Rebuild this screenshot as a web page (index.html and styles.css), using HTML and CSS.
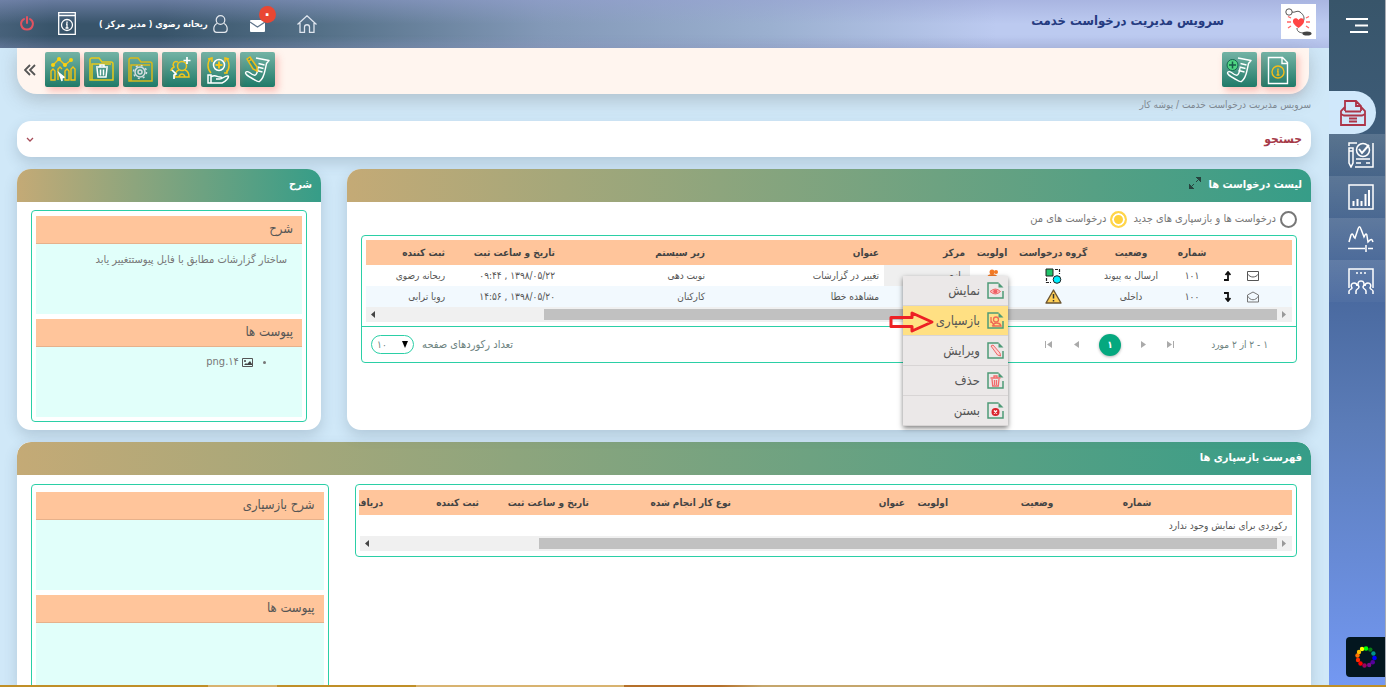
FILE: index.html
```html
<!DOCTYPE html>
<html lang="fa" dir="rtl">
<head>
<meta charset="utf-8">
<title>سرویس مدیریت درخواست خدمت</title>
<link rel="stylesheet" href="styles.css">
</head>
<body>
<svg class="defs" aria-hidden="true">
  <symbol id="i-page" viewBox="0 0 17 17"><path d="M11.500 1H1v15h15V9" fill="none" stroke="#4f9a77" stroke-width="1.500"/><path d="M11.500 0.500V5.500H16.500z" fill="#4f9a77"/></symbol>
  <symbol id="i-note" viewBox="0 0 35 35"><path d="M16 6l13 2.500-2.500 3-1.500 7c-1 5-3 9-5.500 11-2 1-5-2-8-3.500-3-1.500-5.500-3-6-5 0-1.500 2-2 4-.5 2.500 2 4.500 3.500 6 2.500 2-1.500 2-4 2.500-7" fill="none" stroke="#fff" stroke-width="1.400" stroke-linejoin="round"/><path d="M18.500 11.500l6 1.500M17.500 15l6 1.500M16.500 18.500l6 1.500" stroke="#fff" stroke-width="1.400"/></symbol>
</svg>
<div class="app">
  <nav class="sidebar" aria-label="منوی اصلی">
    <button class="menu-toggle" aria-label="منو"><svg width="22" height="17" viewBox="0 0 22 17"><path d="M0 2h22M9 8.500h13M4 15h18" stroke="#fff" stroke-width="2"/></svg></button>
    <a class="nav-item active" href="#" aria-label="پوشه کار"><svg width="26" height="26" viewBox="0 0 26 26" fill="none" stroke="#ad3447" stroke-width="1.800"><path d="M5 11V1h11l5 5v5M16 1v5h5"/><path d="M5 7L1 11v3l3 1.500h18l3-1.500v-3l-4-4M5 11.500h16M1 13v12h24V13M9 18.500h8M9 21.500h8"/></svg></a>
    <a class="nav-item" href="#" aria-label="ارزیابی"><svg width="26" height="26" viewBox="0 0 26 26" fill="none" stroke="#fff" stroke-width="1.500"><path d="M1 4V1h8M25 1v24H7M1 6h4v15l-2 4-2-4zM1 9h4M8 17h14M8 21h5M18 21h4"/><circle cx="15" cy="8" r="6.500"/><path d="M11 7l3 4 7-8" stroke-width="2"/></svg></a>
    <a class="nav-item" href="#" aria-label="گزارش"><svg width="26" height="26" viewBox="0 0 26 26" fill="none" stroke="#fff" stroke-width="1.500"><path d="M1 1h24v24H1z"/><path d="M5.500 22v-5M9.500 22v-7M13.500 22v-5M17.500 22V10M21 22V6" stroke-width="2"/></svg></a>
    <a class="nav-item" href="#" aria-label="نمودار"><svg width="26" height="26" viewBox="0 0 26 26" fill="none" stroke="#fff" stroke-width="1.500"><path d="M1 16l2-7c1-2 2-1 3 2l1 1 3-9c1-3 2-3 3 0l3 8 1-2c1-2 2-1 2 1l1 6 2-2c2-1 2 0 3 2M0 22.500h17M20 22.500h5M18 19v7"/></svg></a>
    <a class="nav-item" href="#" aria-label="کاربران"><svg width="26" height="26" viewBox="0 0 26 26" fill="none" stroke="#fff" stroke-width="1.500"><path d="M1 20V1h24v19M8 5h2M12 5h2M16 5h2"/><path d="M8 26v-3c0-2 3-2 3-4-2-3-1-6 2-6s4 3 2 6c0 2 3 2 3 4v3M1 26v-3c0-1 3-2 3-3-2-3 0-5 2-5s3 1 3 3M25 26v-3c0-1-3-2-3-3 2-3 0-5-2-5s-3 1-3 3"/></svg></a>
    <button class="theme" aria-label="انتخاب رنگ"><svg width="22" height="22" viewBox="-11 -11 22 22"><g><circle cy="-8.500" r="2.300" fill="#0f0"/><circle cx="4.300" cy="-7.400" r="2.200" fill="#087b16"/><circle cx="7.400" cy="-3.500" r="2.200" fill="#00918c"/><circle cx="8.500" cy="1" r="2.300" fill="#00f"/><circle cx="6.700" cy="5.200" r="2.300" fill="#55009b"/><circle cx="3.200" cy="8" r="2.200" fill="#7c0b8b"/><circle cx="-1.500" cy="8.500" r="2.200" fill="#a3005e"/><circle cx="-5.500" cy="6.500" r="2.200" fill="#f00"/><circle cx="-8" cy="3" r="2.200" fill="#ff2900"/><circle cx="-8.500" cy="-1.500" r="2.200" fill="#ff6f00"/><circle cx="-7" cy="-5" r="2.200" fill="#fb0"/><circle cx="-4" cy="-8" r="2.200" fill="#ff0"/></g></svg></button>
  </nav>
  <div class="main">
    <header class="topbar">
      <svg class="logo" width="35" height="35" viewBox="0 0 35 35"><path fill="#fff" d="M0 0h35v35H0z"/><circle cx="8" cy="8" r="3.200" fill="none" stroke="#555"/><path d="M11 8c3 1 5-2 8 0 4 3 5 6 3 10M16 24c0 4 3 5 8 5" fill="none" stroke="#555"/><ellipse cx="26" cy="29.500" rx="4.500" ry="2" fill="#444"/><path d="M17.500 24c-4-3-6-5-5.500-7.500.8-3 4-3 5.500-.5 1.500-2.500 5-2.500 5.500.5.500 2.500-1.500 4.500-5.500 7.500z" fill="#ff4545"/><path d="M10 18H6M10 14l-3-1.500M10 22l-3 2M25 18h4M25 14l3-1.500M25 22l3 2" stroke="#ff6565" stroke-width="1.300"/></svg>
      <h1>سرویس مدیریت درخواست خدمت</h1>
      <div class="tools">
        <a class="home" href="#" aria-label="خانه"><svg width="20" height="18" viewBox="0 0 20 18" fill="none" stroke="#dfe5ee" stroke-width="1.300"><path d="M.5 9.500L10 .8l9.500 8.700M3 8v9.300h4.500V12c0-3 5-3 5 0v5.300H17V8"/></svg></a>
        <a class="mail" href="#" aria-label="پیام ها"><svg width="15" height="12" viewBox="0 0 15 12"><rect width="15" height="12" rx="1" fill="#fff"/><path d="M0 2l7.500 5L15 2" fill="none" stroke="#61758b" stroke-width="1.200"/></svg><span class="badge">۰</span></a>
        <a class="user" href="#"><svg width="15" height="18" viewBox="0 0 15 18" fill="none" stroke="#e4e8ee" stroke-width="1.200"><circle cx="7.500" cy="5" r="4.300"/><path d="M4 8.500C2 9.500.8 11 .8 14c0 3 1.200 3.300 2.700 3.300h8c1.500 0 2.700-.3 2.700-3.300 0-3-1.200-4.500-3.200-5.500"/></svg><span>ریحانه رضوی ( مدیر مرکز )</span></a>
        <a class="info" href="#" aria-label="راهنما"><svg width="18" height="23" viewBox="0 0 18 23" fill="none" stroke="#fff" stroke-width="1.300"><path d="M.7.700h16.600v21.600H.7zM.7 3.500h16.600"/><circle cx="9" cy="13" r="5.500"/><path d="M9 9.500V11M8 12h1v4M7.500 16h3"/></svg></a>
        <button class="power" aria-label="خروج"><svg width="14" height="15" viewBox="0 0 14 15" fill="none" stroke="#e25360" stroke-width="2" stroke-linecap="round"><path d="M4 3C-1 6 1 13.500 7 13.500S15 6 10 3M7 1v6"/></svg></button>
      </div>
    </header>
    <div class="content">
      <div class="ribbon">
        <button class="tool" aria-label="اطلاعات"><svg width="35" height="35" viewBox="0 0 35 35" fill="none" stroke="#fff" stroke-width="1.400"><path d="M7.500 5.500h14l5 5v21h-19zM21 5.500v6h5.500"/><g stroke="#f4bd19"><circle cx="17" cy="20" r="6"/><path d="M17 16.500V18M16 19h1v4M15.500 23h3"/></g></svg></button>
        <button class="tool" aria-label="درخواست جدید"><svg width="35" height="35"><use href="#i-note"/><circle cx="10.500" cy="13" r="5.500" fill="#4fd582" stroke="#176850"/><path d="M10.500 9.500v7M7 13h7" stroke="#175b48" stroke-width="1.500"/></svg></button>
        <span class="spacer"></span>
        <button class="tool" aria-label="ویرایش"><svg width="35" height="35"><use href="#i-note"/><path d="M7 7l3-2 7 10v4l-4-2zM9 9l3-2" fill="#3f9280" stroke="#f0bd17" stroke-width="1.500"/></svg></button>
        <button class="tool" aria-label="خدمت"><svg width="35" height="35" viewBox="0 0 35 35" fill="none" stroke="#f2c51b" stroke-width="1.500"><path d="M10 6c-4 4-4 11 0 15M25 6c4 4 4 11 0 15M7 7l4-1v4M28 7l-4-1v4M23 21h3v-3"/><circle cx="18" cy="13" r="5.500" stroke="#fff"/><path d="M18 9.500v7M14.500 13h7" stroke-width="2"/><path d="M7 23h3v8H7zM10 25c4-3 6 0 9 0 3 0 2 2-1 2h-3m3 0c3 1 6-4 9-3 2 1-3 6-6 7H10" stroke="#fff"/></svg></button>
        <button class="tool" aria-label="افزودن کاربر"><svg width="35" height="35" viewBox="0 0 35 35" fill="none" stroke="#f2c51b" stroke-width="1.500"><circle cx="20" cy="14" r="4.500"/><path d="M17 18c-3 1-4 3-4 7h14c0-4-1-6-4-7M16 10c-4-2-6 2-4 5-2 1-3 2-3 4M17 25c1-4 5-4 6 0"/><path d="M25 5v7M21.500 8.500h7M10 18l4 4-2 1v4" stroke="#fff" stroke-width="1.700"/></svg></button>
        <button class="tool" aria-label="تنظیمات پوشه"><svg width="35" height="35" viewBox="0 0 35 35" fill="none" stroke="#d8b91d" stroke-width="1.500"><path d="M6 29V8c0-1 1-2 2-2h7l3 4h9c1 0 2 1 2 2v17zM8 29V13h19"/><g stroke="#d4dde0"><circle cx="17" cy="20" r="5"/><circle cx="17" cy="20" r="2"/><circle cx="17" cy="20" r="6.500" stroke-dasharray="2 3.100"/></g></svg></button>
        <button class="tool" aria-label="حذف پوشه"><svg width="35" height="35" viewBox="0 0 35 35" fill="none" stroke="#e6c91c" stroke-width="1.500"><path d="M6 28V8c0-1 1-2 2-2h7l3 4h9c1 0 2 1 2 2v16zM8 28V12h19"/><path d="M12 15h12M16 15v-2h4v2M13 16l1 9h8l1-9M16.500 17.500v6M19.500 17.500v6" stroke="#fff"/></svg></button>
        <button class="tool" aria-label="نمودار عملکرد"><svg width="35" height="35" viewBox="0 0 35 35" fill="none" stroke="#f4c414" stroke-width="1.400"><path d="M8 13l6-6 6 6 6-5"/><g fill="#f9d310" stroke="none"><circle cx="8" cy="13" r="2"/><circle cx="14" cy="7" r="2"/><circle cx="20" cy="13" r="2"/><circle cx="26" cy="8" r="2"/></g><path d="M6 28V19l2-2 2 2v9zM13 28V17l2-2 2 2M20 28V19l2-2 2 2v9zM26 28V17l2-2 2 2v11z"/><path d="M14 21l5 4-2 1v3z" fill="#fff" stroke="#fff"/></svg></button>
        <button class="collapse" aria-label="بستن نوار"><svg width="12" height="12" viewBox="0 0 12 12"><path d="M6 1L1 6l5 5M11 1L6 6l5 5" fill="none" stroke="#555" stroke-width="1.800"/></svg></button>
      </div>
      <nav class="crumbs" aria-label="مسیر">سرویس مدیریت درخواست خدمت / پوشه کار</nav>
      <button class="search card"><span>جستجو</span><svg width="8" height="5" viewBox="0 0 8 5"><path d="M1 1l3 3 3-3" fill="none" stroke="#a64b58" stroke-width="1.300"/></svg></button>
      <div class="row">
        <section class="card requests">
          <h2>لیست درخواست ها <svg width="12" height="12" viewBox="0 0 12 12"><path d="M7 0h5v5zM0 7v5h5zM7 5l3-3M2 10l3-3" stroke="#27443f" fill="#27443f"/></svg></h2>
          <div class="list-body">
            <div class="filters">
              <label><input type="radio" name="scope">درخواست ها و بازسپاری های جدید</label>
              <label><input type="radio" name="scope" checked>درخواست های من</label>
            </div>
            <div class="frame">
              <div class="grid-wrap">
                <table class="grid">
                  <colgroup><col style="width:26px"><col style="width:26px"><col style="width:26px"><col style="width:44px"><col style="width:78px"><col style="width:78px"><col style="width:44px"><col style="width:86px"><col style="width:174px"><col style="width:150px"><col style="width:110px"><col style="width:84px"></colgroup>
                  <thead><tr><th></th><th></th><th></th><th class="mid">شماره</th><th class="mid">وضعیت</th><th class="mid">گروه درخواست</th><th class="mid">اولویت</th><th>مرکز</th><th>عنوان</th><th>زیر سیستم</th><th>تاریخ و ساعت ثبت</th><th>ثبت کننده</th></tr></thead>
                  <tbody>
                    <tr><td></td><td class="mid"><svg width="12" height="10" viewBox="0 0 12 10"><path d="M.5.500h11v9H.5zM.5 3c3 4 8 4 11 0" fill="none" stroke="#555"/></svg></td><td class="mid"><svg width="7" height="10" viewBox="0 0 7 10"><path d="M0 9h4V2M1.500 4L4 1l2.500 3" fill="none" stroke="#111" stroke-width="1.800"/></svg></td><td class="mid">۱۰۱</td><td class="mid">ارسال به پیوند</td><td class="mid"><svg width="17" height="16" viewBox="0 0 17 16"><path d="M1 1h7v7H1z" fill="#22c36a" stroke="#222"/><circle cx="12" cy="11.500" r="3.800" fill="#00efff" stroke="#222"/><path d="M10 1.500h4.500V6M1.500 10v4.500H6" fill="none" stroke="#222" stroke-width="1.200" stroke-dasharray="3 1"/></svg></td><td class="mid"><svg width="13" height="14" viewBox="0 0 13 14" fill="#f47b26"><circle cx="6" cy="3" r="2.500"/><circle cx="10" cy="3" r="2"/><path d="M1 8c1-4 9-4 11 0v4H1z"/></svg></td><td class="picked">رازی</td><td>تغییر در گزارشات</td><td>نوبت دهی</td><td>۱۳۹۸/۰۵/۲۲ , ۰۹:۴۴</td><td>ریحانه رضوی</td></tr>
                    <tr><td></td><td class="mid"><svg width="12" height="12" viewBox="0 0 12 12"><path d="M.5 4L6 1l5.500 3v7H.5zM.5 5c3 5 8 5 11 0" fill="none" stroke="#777"/></svg></td><td class="mid"><svg width="7" height="10" viewBox="0 0 7 10"><path d="M0 1h4v7M1.500 6L4 9l2.500-3" fill="none" stroke="#111" stroke-width="1.800"/></svg></td><td class="mid">۱۰۰</td><td class="mid">داخلی</td><td class="mid"><svg width="17" height="15" viewBox="0 0 17 15"><path d="M8.500 1L16 14H1z" fill="#ffcf55" stroke="#6b5533" stroke-width="1.400" stroke-linejoin="round"/><path d="M8.500 5v4.500M8.500 11v1.500" stroke="#333" stroke-width="1.500"/></svg></td><td></td><td></td><td>مشاهده خطا</td><td>کارکنان</td><td>۱۳۹۸/۰۵/۲۰ , ۱۴:۵۶</td><td>رویا ترابی</td></tr>
                  </tbody>
                </table>
                <div class="scroll"><svg width="5" height="7" viewBox="0 0 5 7"><path d="M0 0l4 3.500L0 7z" fill="#999"/></svg><span class="thumb"></span><svg width="5" height="7" viewBox="0 0 5 7"><path d="M4 0L0 3.500 4 7z" fill="#444"/></svg></div>
              </div>
              <div class="pager">
                <span class="count">۱ - ۲ از ۲ مورد</span>
                <div class="pages">
                  <button aria-label="اولین"><svg width="8" height="7" viewBox="0 0 8 7"><path d="M0 0l5 3.500L0 7zM6 0h1v7H6z"/></svg></button>
                  <button aria-label="قبلی"><svg width="8" height="7" viewBox="0 0 8 7"><path d="M1 0l5 3.500L1 7z"/></svg></button>
                  <button class="current">۱</button>
                  <button aria-label="بعدی"><svg width="8" height="7" viewBox="0 0 8 7"><path d="M7 0L2 3.500 7 7z"/></svg></button>
                  <button aria-label="آخرین"><svg width="8" height="7" viewBox="0 0 8 7"><path d="M7 0L2 3.500 7 7zM0 0h1v7H0z"/></svg></button>
                </div>
                <label class="size" for="size">تعداد رکوردهای صفحه</label>
                <span class="select"><select id="size" dir="ltr"><option>۱۰</option></select><svg width="6" height="7" viewBox="0 0 6 7"><path d="M0 0h6L3 7z"/></svg></span>
              </div>
            </div>
          </div>
          <div class="menu" role="menu">
            <button role="menuitem"><svg width="17" height="17"><use href="#i-page"/><path d="M3 9.500q5.500-5 10.500 0-5 5-10.500 0z" fill="#ffb3b3" stroke="#ee6f70"/><circle cx="8.300" cy="9.500" r="2" fill="#ee5f65"/></svg>نمایش</button>
            <button role="menuitem" class="hot"><svg width="17" height="17"><use href="#i-page"/><g fill="none" stroke="#ef6b55" stroke-width="1.300"><circle cx="9" cy="7.500" r="2.500"/><path d="M4 5v6M6 14c0-4 7-4 8 0zM4 9l3 4-2 1"/></g></svg>بازسپاری</button>
            <button role="menuitem"><svg width="17" height="17"><use href="#i-page"/><path d="M4 4l2-1 7 8 .5 3-3-1z" fill="#ffd2d2" stroke="#ed6666"/></svg>ویرایش</button>
            <button role="menuitem"><svg width="17" height="17"><use href="#i-page"/><path d="M3.500 6h10M7 6V4h3v2M5 7l.7 7h5.600l.7-7M7.500 8v5M9.500 8v5" fill="none" stroke="#f16b6b" stroke-width="1.300"/></svg>حذف</button>
            <button role="menuitem"><svg width="17" height="17"><use href="#i-page"/><circle cx="8.500" cy="10" r="4" fill="#d9242d"/><path d="M7 8.500l3 3M10 8.500l-3 3" stroke="#fff" stroke-width="1.400"/></svg>بستن</button>
            <svg class="pointer" width="46" height="22" viewBox="0 0 46 22"><path d="M2 6.500h21V2l20 9-20 9v-4.500H2z" fill="none" stroke="#ed2024" stroke-width="3" stroke-linejoin="round"/></svg>
          </div>
        </section>
        <section class="card side">
          <h2>شرح</h2>
          <div class="side-body">
            <div class="frame notes">
              <h3>شرح</h3>
              <div class="note"><p>ساختار گزارشات مطابق با فایل پیوستتغییر یابد</p></div>
              <h3>پیوست ها</h3>
              <div class="note"><ul><li><a href="#"><svg width="11" height="9" viewBox="0 0 11 9"><path d="M.5.500h10v8H.5z" fill="none" stroke="#555"/><path d="M2 7l2-2 1 1 3-3 2 3v1z" fill="#444"/><circle cx="3" cy="3" r="1" fill="#444"/></svg> ۱۴.png</a></li></ul></div>
            </div>
          </div>
        </section>
      </div>
      <section class="card assignments">
        <h2>فهرست بازسپاری ها</h2>
        <div class="assign-body">
          <div class="frame">
            <div class="grid-wrap">
              <table class="grid">
                <colgroup><col style="width:139px"><col style="width:32px"><col style="width:168px"><col style="width:43px"><col style="width:174px"><col style="width:142px"><col style="width:110px"><col style="width:96px"><col style="width:29px"></colgroup>
                <thead><tr><th></th><th class="mid">شماره</th><th class="mid">وضعیت</th><th>اولویت</th><th>عنوان</th><th>نوع کار انجام شده</th><th>تاریخ و ساعت ثبت</th><th>ثبت کننده</th><th class="cut">دریافت</th></tr></thead>
                <tbody><tr><td colspan="9">رکوردی برای نمایش وجود ندارد</td></tr></tbody>
              </table>
              <div class="scroll"><svg width="5" height="7" viewBox="0 0 5 7"><path d="M0 0l4 3.500L0 7z" fill="#999"/></svg><span class="thumb"></span><svg width="5" height="7" viewBox="0 0 5 7"><path d="M4 0L0 3.500 4 7z" fill="#444"/></svg></div>
            </div>
          </div>
          <div class="frame notes">
            <h3>شرح بازسپاری</h3>
            <div class="note"></div>
            <h3>پیوست ها</h3>
            <div class="note"></div>
          </div>
        </div>
      </section>
    </div>
  </div>
</div>
<footer class="edge"></footer>
</body>
</html>
```
FILE: styles.css
```css
* { box-sizing: border-box; }
body {
  margin: 0;
  height: 100vh;
  display: flex;
  flex-direction: column;
  overflow: hidden;
  background: #d0e8f8;
  color: #555;
  font: 10px/16px "DejaVu Sans Condensed", "DejaVu Sans", sans-serif;
}
h1, h2, h3, p, ul { margin: 0; }
button, select, input { font: inherit; color: inherit; }
button { border: 0; padding: 0; background: none; }
a { color: inherit; text-decoration: none; }
svg { display: block; flex: none; }
.defs { position: absolute; width: 0; height: 0; }
.app { display: flex; flex: 1; min-height: 0; }
.edge { height: 2px; flex: none; background: linear-gradient(90deg, #c08f28 0 15%, #d8b370 15% 20%, #c08f28 20% 30%, #d8b370 30% 45%, #b5702a 45% 52%, #c5a66c 55% 70%, #c08f28 80%); }

.sidebar {
  position: relative;
  width: 57px;
  flex: none;
  border-right: 1px solid #a9adb5;
  background: linear-gradient(#38556a, #3c5a74 14%, #4a6aa0 44%, #5b7cb8 62%, #7398f2);
}
.menu-toggle { display: flex; width: 100%; height: 91px; padding: 17px 17px 0; justify-content: center; }
.nav-item {
  display: flex;
  align-items: center;
  justify-content: center;
  height: 42px;
  padding-left: 8px;
  background: linear-gradient(rgba(255, 255, 255, .14), rgba(255, 255, 255, .03));
}
.nav-item.active { height: 43px; margin-right: 9px; padding: 0; background: #d0e8fb; border-radius: 0 22px 22px 0; }
.theme { position: absolute; right: 0; bottom: 8px; width: 39px; height: 40px; display: flex; align-items: center; justify-content: center; background: #03161f; border-radius: 4px 0 0 4px; }

.main { flex: 1; min-width: 0; display: flex; flex-direction: column; }
.topbar {
  display: flex;
  align-items: center;
  height: 48px;
  flex: none;
  padding: 0 13px 7px 20px;
  background: linear-gradient(rgba(150, 160, 210, .5), rgba(150, 160, 210, 0) 50%, rgba(150, 160, 210, 0) 75%, rgba(150, 160, 210, .3)), linear-gradient(90deg, #47617a, #38546a 4%, #38546a 12%, #547087 24%, #8399b8 41%, #9bb0d0 58%, #bccaf0 75%);
}
.logo { margin-top: 2px; }
h1 { margin-right: 57px; color: #253b80; font-size: 13px; line-height: 20px; }
.tools { display: flex; align-items: center; margin-right: auto; padding-top: 6px; color: #fff; }
.mail { position: relative; margin-right: 32px; padding-top: 4px; }
.badge { position: absolute; left: 9px; top: -10px; width: 17px; height: 17px; border-radius: 50%; background: #e94733; text-align: center; font-size: 16px; font-weight: bold; }
.user { display: flex; align-items: center; gap: 5px; margin-right: 22px; font-size: 9px; font-weight: bold; }
.info { margin-right: 23px; }
.power { margin-right: 24px; }

.content { flex: 1; min-height: 0; display: flex; flex-direction: column; padding: 0 18px 0 17px; }
.ribbon {
  display: flex;
  align-items: center;
  gap: 4px;
  height: 46px;
  flex: none;
  margin-right: 2px;
  padding: 0 13px 3px 7px;
  background: #fff5ef;
  border-radius: 0 0 20px 20px;
  box-shadow: 0 6px 18px rgba(80, 80, 80, .26);
}
.spacer { flex: 1; }
.tool { width: 35px; height: 35px; border-radius: 2px; background: linear-gradient(#74b3a5, #207a68); box-shadow: 3px 4px 7px rgba(240, 90, 80, .35); }
.collapse { margin-right: 5px; }
.crumbs { height: 27px; flex: none; padding-top: 3px; color: #7e8891; }
.card { background: #fff; border-radius: 14px; box-shadow: 0 6px 14px rgba(60, 80, 100, .2); }
.search { display: flex; flex: none; align-items: center; justify-content: space-between; height: 36px; padding: 0 9px; color: #a63a49; font-size: 12px; font-weight: bold; }
.row { display: flex; gap: 26px; height: 261px; flex: none; margin: 12px 0; }
.requests { position: relative; flex: 1; min-width: 0; }
.side { width: 23.5%; flex: none; }
h2 {
  display: flex;
  gap: 8px;
  height: 33px;
  padding: 8px 9px 0;
  border-radius: 14px 14px 0 0;
  background: linear-gradient(90deg, #c4aa76, #369d88);
  color: #fff;
  font-size: 11px;
  line-height: 16px;
}
.list-body { padding: 7px 14px 0; }
.filters { display: flex; gap: 6px; height: 26px; color: #777; font-size: 11px; }
.filters label { display: flex; align-items: center; gap: 4px; height: 20px; }
.filters input { appearance: none; width: 17px; height: 17px; margin: 0; border: 2px solid #777; border-radius: 50%; }
.filters input:checked { border-color: #ffd54a; background: #ffd23c; box-shadow: inset 0 0 0 2px #fff; }
.frame { border: 1px solid #2bcfa6; border-radius: 4px; }
.grid-wrap { padding: 4px; overflow: hidden; }
.grid { width: 100%; table-layout: fixed; border-collapse: collapse; }
.grid th, .grid td { height: 21px; padding: 0 5px; text-align: right; white-space: nowrap; line-height: 16px; }
.grid th { height: 25px; background: #ffc59b; color: #444; font-size: 10px; }
.grid .mid { padding: 0; text-align: center; }
.grid .mid svg { display: inline-block; vertical-align: middle; }
.grid .cut { padding-left: 0; overflow: hidden; }
.grid tbody tr:nth-child(2) { background: #f2f9fe; }
.grid .picked { background: #efefef; }
.scroll { display: flex; align-items: center; justify-content: space-between; height: 15px; padding: 2px 5px; background: #f0f0f0; }
.thumb { width: 80%; height: 11px; margin-left: auto; margin-right: 5px; background: #c1c1c1; }
.pager { display: flex; align-items: center; height: 36px; padding: 0 28px 0 9px; border-top: 1px solid #2bcfa6; color: #6c8380; }
.count { width: 93px; }
.pages { display: flex; align-items: center; gap: 19px; }
.pages button { display: flex; align-items: center; justify-content: center; height: 22px; }
.pages svg { fill: #aaa; }
.pages .current { width: 22px; border-radius: 50%; background: #05a87f; color: #fff; font-weight: bold; box-shadow: 0 1px 3px rgba(0, 0, 0, .3); }
.size { margin-right: auto; margin-left: 8px; font-size: 11px; }
.select { position: relative; }
.select select { appearance: none; display: block; width: 43px; height: 19px; padding: 0 5px; border: 1px solid #2bcfa6; border-radius: 10px; background: #fff; }
.select svg { position: absolute; right: 6px; top: 6px; }

.menu { position: absolute; right: 303px; top: 107px; width: 105px; background: #ebe8e8; box-shadow: 0 2px 5px rgba(0, 0, 0, .5); font-size: 13px; }
.menu button { display: flex; align-items: center; gap: 7px; width: 100%; height: 30px; padding: 0 4px; border-bottom: 1px solid #d8d5d5; }
.menu .hot { background: #ffe083; }
.pointer { position: absolute; left: -14px; top: 35px; }

.side-body { padding: 8px 14px; }
.notes { padding: 5px 4px 4px; }
h3 { height: 28px; padding: 5px 9px; background: #ffc59b; border-bottom: 1px solid #e6b18b; font-size: 13px; font-weight: normal; line-height: 16px; }
.note { height: 70px; margin-bottom: 5px; background: #e1fffa; color: #777; font-size: 11px; }
.note:last-child { margin-bottom: 0; }
.note p { padding: 8px 15px; }
.note ul { padding: 7px 49px 0 0; }
.note li { list-style-position: outside; }
.note a svg { display: inline-block; vertical-align: middle; }
.assignments { flex: 1; min-height: 0; overflow: hidden; border-radius: 14px 14px 0 0; }
.assign-body { display: flex; align-items: flex-start; gap: 26px; padding: 9px 14px; }
.assign-body > .frame:first-child { flex: 1; min-width: 0; }
.assign-body .grid-wrap { padding-top: 5px; padding-bottom: 5px; }
.assign-body .notes { width: 23.5%; flex: none; padding-top: 7px; }
```
